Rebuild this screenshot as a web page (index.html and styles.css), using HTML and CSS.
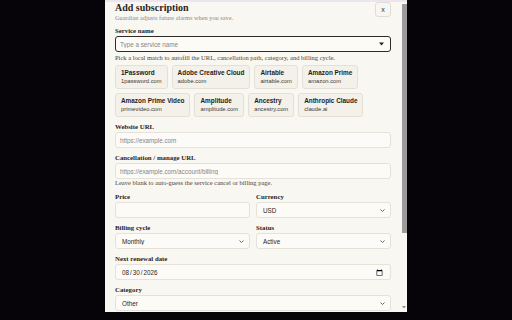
FILE: index.html
```html
<!DOCTYPE html>
<html>
<head>
    <title>Add subscription</title>
    <link rel="stylesheet" href="styles.css">
</head>
<body>
    <div class="backdrop">
        <div class="modal">
            <form class="modal-body">
                <div class="modal-head">
                    <div>
                        <h2>Add subscription</h2>
                        <p class="sub">Guardian adjusts future alarms when you save.</p>
                    </div>
                    <button type="button" class="close">x</button>
                </div>

                <label class="field">
                    <span class="label">Service name</span>
                    <span class="combo">
                        <input type="text" placeholder="Type a service name" autofocus>
                        <svg width="5" height="4" viewBox="0 0 5 4"><path d="M0 0.5h5L2.5 3.5z" fill="#222"/></svg>
                    </span>
                </label>
                <p class="hint">Pick a local match to autofill the URL, cancellation path, category, and billing cycle.</p>

                <div class="chips">
                    <button type="button" class="chip"><b>1Password</b><span>1password.com</span></button>
                    <button type="button" class="chip"><b>Adobe Creative Cloud</b><span>adobe.com</span></button>
                    <button type="button" class="chip"><b>Airtable</b><span>airtable.com</span></button>
                    <button type="button" class="chip"><b>Amazon Prime</b><span>amazon.com</span></button>
                    <button type="button" class="chip"><b>Amazon Prime Video</b><span>primevideo.com</span></button>
                    <button type="button" class="chip"><b>Amplitude</b><span>amplitude.com</span></button>
                    <button type="button" class="chip"><b>Ancestry</b><span>ancestry.com</span></button>
                    <button type="button" class="chip"><b>Anthropic Claude</b><span>claude.ai</span></button>
                </div>

                <label class="field">
                    <span class="label">Website URL</span>
                    <input class="input" type="text" placeholder="https://example.com">
                </label>

                <label class="field">
                    <span class="label">Cancellation / manage URL</span>
                    <input class="input" type="text" placeholder="https://example.com/account/billing">
                </label>
                <p class="hint tight">Leave blank to auto-guess the service cancel or billing page.</p>

                <div class="row">
                    <label class="field">
                        <span class="label">Price</span>
                        <input class="input" type="text">
                    </label>
                    <label class="field">
                        <span class="label">Currency</span>
                        <span class="select">
                            <select><option>USD</option><option>EUR</option><option>GBP</option></select>
                            <svg width="5" height="3" viewBox="0 0 5 3"><path d="M0.5 0.5l2 2 2-2" fill="none" stroke="#555" stroke-width="0.9"/></svg>
                        </span>
                    </label>
                    <label class="field">
                        <span class="label">Billing cycle</span>
                        <span class="select">
                            <select><option>Monthly</option><option>Yearly</option><option>Weekly</option></select>
                            <svg width="5" height="3" viewBox="0 0 5 3"><path d="M0.5 0.5l2 2 2-2" fill="none" stroke="#555" stroke-width="0.9"/></svg>
                        </span>
                    </label>
                    <label class="field">
                        <span class="label">Status</span>
                        <span class="select">
                            <select><option>Active</option><option>Trial</option><option>Paused</option></select>
                            <svg width="5" height="3" viewBox="0 0 5 3"><path d="M0.5 0.5l2 2 2-2" fill="none" stroke="#555" stroke-width="0.9"/></svg>
                        </span>
                    </label>
                </div>

                <label class="field">
                    <span class="label">Next renewal date</span>
                    <input class="input date" type="date" value="2026-08-30">
                </label>

                <label class="field">
                    <span class="label">Category</span>
                    <span class="select">
                        <select><option>Other</option><option>Productivity</option><option>Entertainment</option></select>
                        <svg width="5" height="3" viewBox="0 0 5 3"><path d="M0.5 0.5l2 2 2-2" fill="none" stroke="#555" stroke-width="0.9"/></svg>
                    </span>
                </label>
            </form>

            <div class="scrollbar">
                <div class="thumb"></div>
                <svg class="arrow" width="4" height="3" viewBox="0 0 4 3"><path d="M0 0h4L2 2.5z" fill="#8a8a8a"/></svg>
            </div>
        </div>
    </div>
</body>
</html>
```

FILE: styles.css
```css
* { box-sizing: border-box; }
body { margin: 0; background: #060408; font-family: 'Liberation Serif', serif; color: #2a2420; }
.backdrop { height: 320px; display: flex; justify-content: center; }
.modal { display: flex; width: 302px; height: 312px; overflow: hidden; background: #f9f7f2; border-top: 2px solid #ece5ef; }
.modal-body { flex: 1; min-width: 0; padding: 0 10px; }

.scrollbar { flex: none; width: 6px; display: flex; flex-direction: column; align-items: center; background: #f7f7f4; }
.thumb { width: 5px; height: 229px; margin-top: 2px; background: #9c9c9c; }
.arrow { margin-top: auto; margin-bottom: 3px; }

.modal-head { display: flex; justify-content: space-between; align-items: flex-start; margin-bottom: 2px; }
h2 { margin: 0; font-size: 10px; line-height: 12px; }
.sub { margin: 0; font-size: 6.3px; line-height: 7px; color: #8f897f; }
.close { width: 16px; height: 15px; padding: 0; border: 1px solid #e2ddd3; border-radius: 3px; background: #f8f6f1; font: 7px 'Liberation Sans', sans-serif; color: #333; }

.field { display: block; margin-top: 5px; }
.label { display: block; font-weight: bold; font-size: 6.8px; line-height: 9px; margin-bottom: 1px; }
.hint { margin: 2px 0 0; font-size: 6.5px; line-height: 8px; color: #4a443d; }
.hint.tight { margin-top: 0; }

.combo { display: flex; align-items: center; height: 16px; padding: 0 6px 0 4px; border: 1px solid #2e2b28; border-radius: 3px; background: #fcfbf8; }
.combo input { flex: 1; min-width: 0; border: none; outline: none; padding: 0; background: transparent; font: 6.3px 'Liberation Sans', sans-serif; color: #2a2420; }
.combo input::placeholder { color: #8a8680; }

.chips { display: flex; flex-wrap: wrap; gap: 4px; margin-top: 3px; }
.chip { display: flex; flex-direction: column; justify-content: center; align-items: flex-start; height: 24px; padding: 0 5px; border: 1px solid #e5e0d5; border-radius: 3px; background: #f4f1ea; font-family: 'Liberation Sans', sans-serif; color: #1f1c1a; }
.chip b { font-size: 6.4px; line-height: 8px; }
.chip span { font-size: 5.8px; line-height: 8px; color: #3d3833; }

.input { display: block; width: 100%; height: 16px; padding: 0 4px; border: 1px solid #e7e2d8; border-radius: 3px; background: #fcfbf8; font: 6.3px 'Liberation Sans', sans-serif; color: #2a2420; }
.input::placeholder { color: #8a8680; }
.date { padding-left: 5px; }
.date::-webkit-calendar-picker-indicator { margin: 0 3px 0 0; padding: 0; width: 7px; height: 7px; }

.select { display: flex; align-items: center; height: 16px; padding-right: 5px; border: 1px solid #e7e2d8; border-radius: 3px; background: #fcfbf8; }
.select select { flex: 1; min-width: 0; height: 100%; padding: 0 0 0 6px; border: none; outline: none; background: transparent; appearance: none; font: 6.3px 'Liberation Sans', sans-serif; color: #2a2420; }

.row { display: grid; grid-template-columns: 1fr 1fr; column-gap: 6px; }
```
